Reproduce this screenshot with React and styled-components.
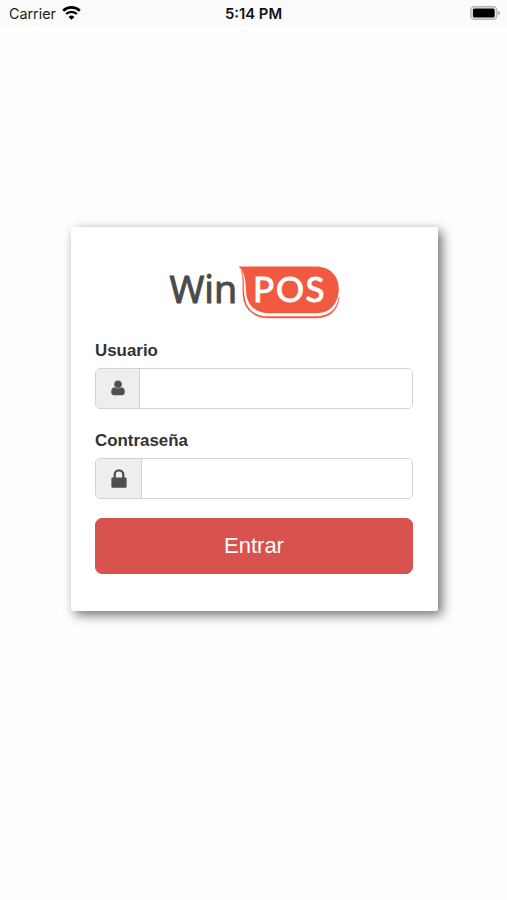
import React, { useState } from "react";
import styled, { createGlobalStyle } from "styled-components";

const GlobalStyle = createGlobalStyle`
  * {
    box-sizing: border-box;
  }

  body {
    margin: 0;
    background: #fefefe;
    font-family: "Liberation Sans", Arial, sans-serif;
    color: #333;
  }
`;

const Screen = styled.div`
  width: 100%;
  height: 900px;
`;

const StatusBar = styled.header`
  display: grid;
  grid-template-columns: 1fr auto 1fr;
  align-items: center;
  height: 26px;
  padding: 0 6px 0 9px;
  background: #fbfbfb;
  font-family: Inter, sans-serif;
  font-size: 14.3px;
  color: #1c1c1c;
`;

const Carrier = styled.div`
  display: flex;
  align-items: center;
  gap: 6px;
`;

const Clock = styled.div`
  margin-left: -3px;
  padding-top: 2px;
  font-size: 14.8px;
  font-weight: 600;
  color: #111;
`;

const Battery = styled.div`
  display: flex;
  justify-content: flex-end;
`;

const Card = styled.form`
  width: 367px;
  height: 384px;
  margin: 201px 0 0 71px;
  padding: 35px 25px 0 24px;
  background: #fff;
  border-radius: 2px;
  box-shadow: 4px 4px 12px rgba(0, 0, 0, 0.56);
`;

const Logo = styled.svg`
  display: block;
  width: 180px;
  height: 62px;
  margin: 0 auto 15px;
`;

const Field = styled.div`
  margin-bottom: ${(props) => props.$space}px;
`;

const Label = styled.label`
  display: block;
  height: 29px;
  padding-top: 2px;
  line-height: 20px;
  font-size: 16.9px;
  font-weight: bold;
`;

const InputGroup = styled.div`
  display: flex;
  height: 41px;
  border: 1px solid #d2d2d2;
  border-radius: 5px;
  overflow: hidden;
`;

const Addon = styled.span`
  display: flex;
  align-items: center;
  justify-content: center;
  width: ${(props) => props.$width}px;
  padding-bottom: 1px;
  background: #eee;
  border-right: 1px solid #d3d3d3;
`;

const Input = styled.input`
  flex: 1;
  min-width: 0;
  padding: 0 14px;
  border: 0;
  outline: 0;
  background: #fff;
  font: inherit;
  font-size: 16px;
`;

const Button = styled.button`
  display: block;
  width: 100%;
  height: 56px;
  padding: 0;
  border: 1px solid #d64f4b;
  border-radius: 7px;
  background: #d8524e;
  color: #fff;
  font-family: inherit;
  font-size: 22px;
`;

const WifiIcon = () => (
  <svg width="19" height="14" viewBox="0 0 19 14" fill="none">
    <path d="M1.2 4.7a12 12 0 0 1 16.6 0" stroke="#000" strokeWidth="2.7" />
    <path d="M4.1 8a7.8 7.8 0 0 1 10.8 0" stroke="#000" strokeWidth="2.4" />
    <path d="M9.5 13.8 6.6 10.9a4.1 4.1 0 0 1 5.8 0z" fill="#000" />
  </svg>
);

const BatteryIcon = () => (
  <svg width="31" height="14" viewBox="0 0 31 14">
    <rect x="0.8" y="0.7" width="26" height="12.6" rx="3.5" fill="#eee" stroke="#b5b5b5" strokeWidth="1.4" />
    <rect x="2.9" y="2.6" width="21.8" height="8.8" rx="1.5" fill="#000" />
    <path d="M28.2 4.8c2.4.8 2.4 3.6 0 4.4z" fill="#aaa" />
  </svg>
);

const UserIcon = () => (
  <svg width="14" height="16" viewBox="0 0 14 16" fill="#4f4f4f">
    <circle cx="7" cy="4.3" r="3.8" />
    <path d="M3.4 7.2C1.2 7.4.2 9.4.2 12c0 2 1 3.2 2.8 3.2h8c1.8 0 2.8-1.2 2.8-3.2 0-2.6-1-4.6-3.2-4.8C9.700 8 8.400 8.300 7 8.300S4.300 8 3.400 7.200z" />
  </svg>
);

const LockIcon = () => (
  <svg width="16" height="19" viewBox="0 0 16 19">
    <path d="M3.7 9V5.6a4.3 4.3 0 0 1 8.6 0V9" fill="none" stroke="#4f4f4f" strokeWidth="2.3" />
    <rect x="0.4" y="8.5" width="15.2" height="10.2" rx="1.2" fill="#4f4f4f" />
  </svg>
);

const WinPosLogo = () => (
  <Logo viewBox="164.500 262 180 62" role="img" aria-label="WinPOS">
    <path
      d="M239 266.500H316C331 266.500 339.300 276 339.300 289C339.300 303 331 313.200 317 313.200H270C255 313.200 247.500 304 246.700 293C246 283 246.500 273 239 266.500z"
      fill="#f15a40"
    />
    <path
      d="M241.800 270.500C245 277 243.700 286 244.500 294C245.500 308 254 316.600 269 316.600H316C329 316.600 337.500 310 339.800 297C338 312 329 318 316 318H269C253 318 244 308 243.400 294C243 286 244.300 278 241.800 270.500z"
      fill="#f15a40"
      stroke="#f15a40"
      strokeWidth="0.5"
    />
    <text
      x="170"
      y="302.500"
      fontFamily="Noto Sans, sans-serif"
      fontSize="37.500"
      fill="#4a4a4a"
      stroke="#4a4a4a"
      strokeWidth="0.900"
    >
      Win
    </text>
    <text
      x="253.500 276.600 306"
      y="301.500"
      fontFamily="Lato, sans-serif"
      fontSize="35"
      fill="#fff"
      stroke="#fff"
      strokeWidth="1"
    >
      POS
    </text>
  </Logo>
);

const App = () => {
  const [user, setUser] = useState("");
  const [password, setPassword] = useState("");

  return (
    <>
      <GlobalStyle />
      <Screen>
        <StatusBar>
          <Carrier>
            Carrier
            <WifiIcon />
          </Carrier>
          <Clock>5:14 PM</Clock>
          <Battery>
            <BatteryIcon />
          </Battery>
        </StatusBar>
        <Card onSubmit={(e) => e.preventDefault()}>
          <WinPosLogo />
          <Field $space={20}>
            <Label htmlFor="user">Usuario</Label>
            <InputGroup>
              <Addon $width={44}>
                <UserIcon />
              </Addon>
              <Input id="user" value={user} onChange={(e) => setUser(e.target.value)} />
            </InputGroup>
          </Field>
          <Field $space={19}>
            <Label htmlFor="password">Contraseña</Label>
            <InputGroup>
              <Addon $width={46}>
                <LockIcon />
              </Addon>
              <Input
                id="password"
                type="password"
                value={password}
                onChange={(e) => setPassword(e.target.value)}
              />
            </InputGroup>
          </Field>
          <Button type="submit">Entrar</Button>
        </Card>
      </Screen>
    </>
  );
};

export default App;
